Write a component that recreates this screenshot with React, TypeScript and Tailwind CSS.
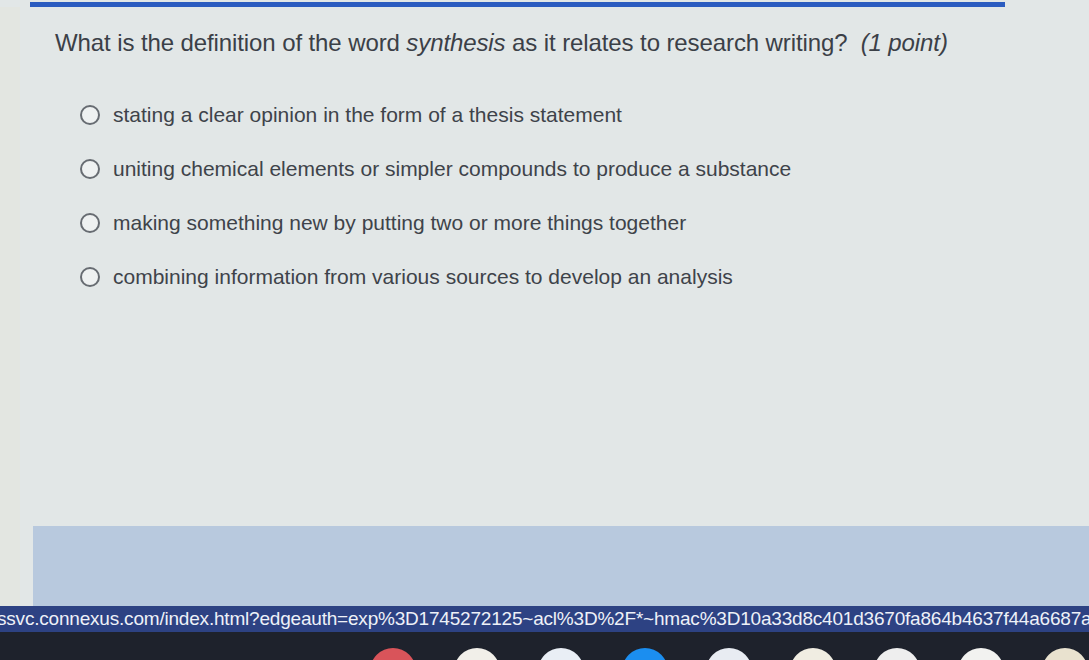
const OPTIONS = [
  'stating a clear opinion in the form of a thesis statement',
  'uniting chemical elements or simpler compounds to produce a substance',
  'making something new by putting two or more things together',
  'combining information from various sources to develop an analysis',
]

const DOCK = ['#d9545a', '#f1efe9', '#e9eef5', '#1b8ef0', '#e8ecf2', '#f0ede2', '#eeeeee', '#f2f2f0', '#e9e2cf']

export default function App() {
  return (
    <div className="flex h-[660px] w-[1089px] flex-col overflow-hidden bg-[#e2e7e7] font-['Liberation_Sans',Arial,sans-serif]">
      <div className="flex flex-1 flex-col">
        <div className="ml-[30px] mt-[2px] h-[5px] w-[975px] bg-[#2b5cc0]" />

        <div className="flex flex-1">
          <div className="w-[20px] bg-[#e3e6e1]" />
          <div className="flex flex-1 flex-col">
            <h1 className="ml-[35px] mt-[22px] text-[24px] leading-[28px] text-[#3b4047] tracking-[-0.1px]">
              What is the definition of the word <i>synthesis</i> as it relates to research writing?&nbsp;&nbsp;
              <i>(1 point)</i>
            </h1>

            <div className="ml-[60px] mt-[46px] flex flex-col gap-[30px]">
              {OPTIONS.map((o) => (
                <label key={o} className="flex items-center gap-[13px]">
                  <span className="h-[20px] w-[20px] rounded-full border-2 border-[#676c72] bg-[#eef1f1]" />
                  <span className="text-[21px] leading-[24px] text-[#3e434a]">{o}</span>
                </label>
              ))}
            </div>

            <div className="flex-1" />
            <div className="ml-[13px] h-[80px] bg-[#b8c9de]" />
          </div>
        </div>
      </div>

      <div className="flex h-[26px] items-center overflow-hidden whitespace-nowrap bg-[#2d4283] text-[19px] text-[#eef1f8]">
        <span className="-ml-[3px] tracking-[-0.2px]">
          ssvc.connexus.com/index.html?edgeauth=exp%3D1745272125~acl%3D%2F*~hmac%3D10a33d8c401d3670fa864b4637f44a6687a
        </span>
      </div>

      <div className="relative h-[28px] bg-[#1e222c]">
        <div className="absolute left-[370px] top-[16px] flex gap-[38px]">
          {DOCK.map((c, i) => (
            <span key={i} className="h-[46px] w-[46px] rounded-full" style={{ background: c }} />
          ))}
        </div>
      </div>
    </div>
  )
}
